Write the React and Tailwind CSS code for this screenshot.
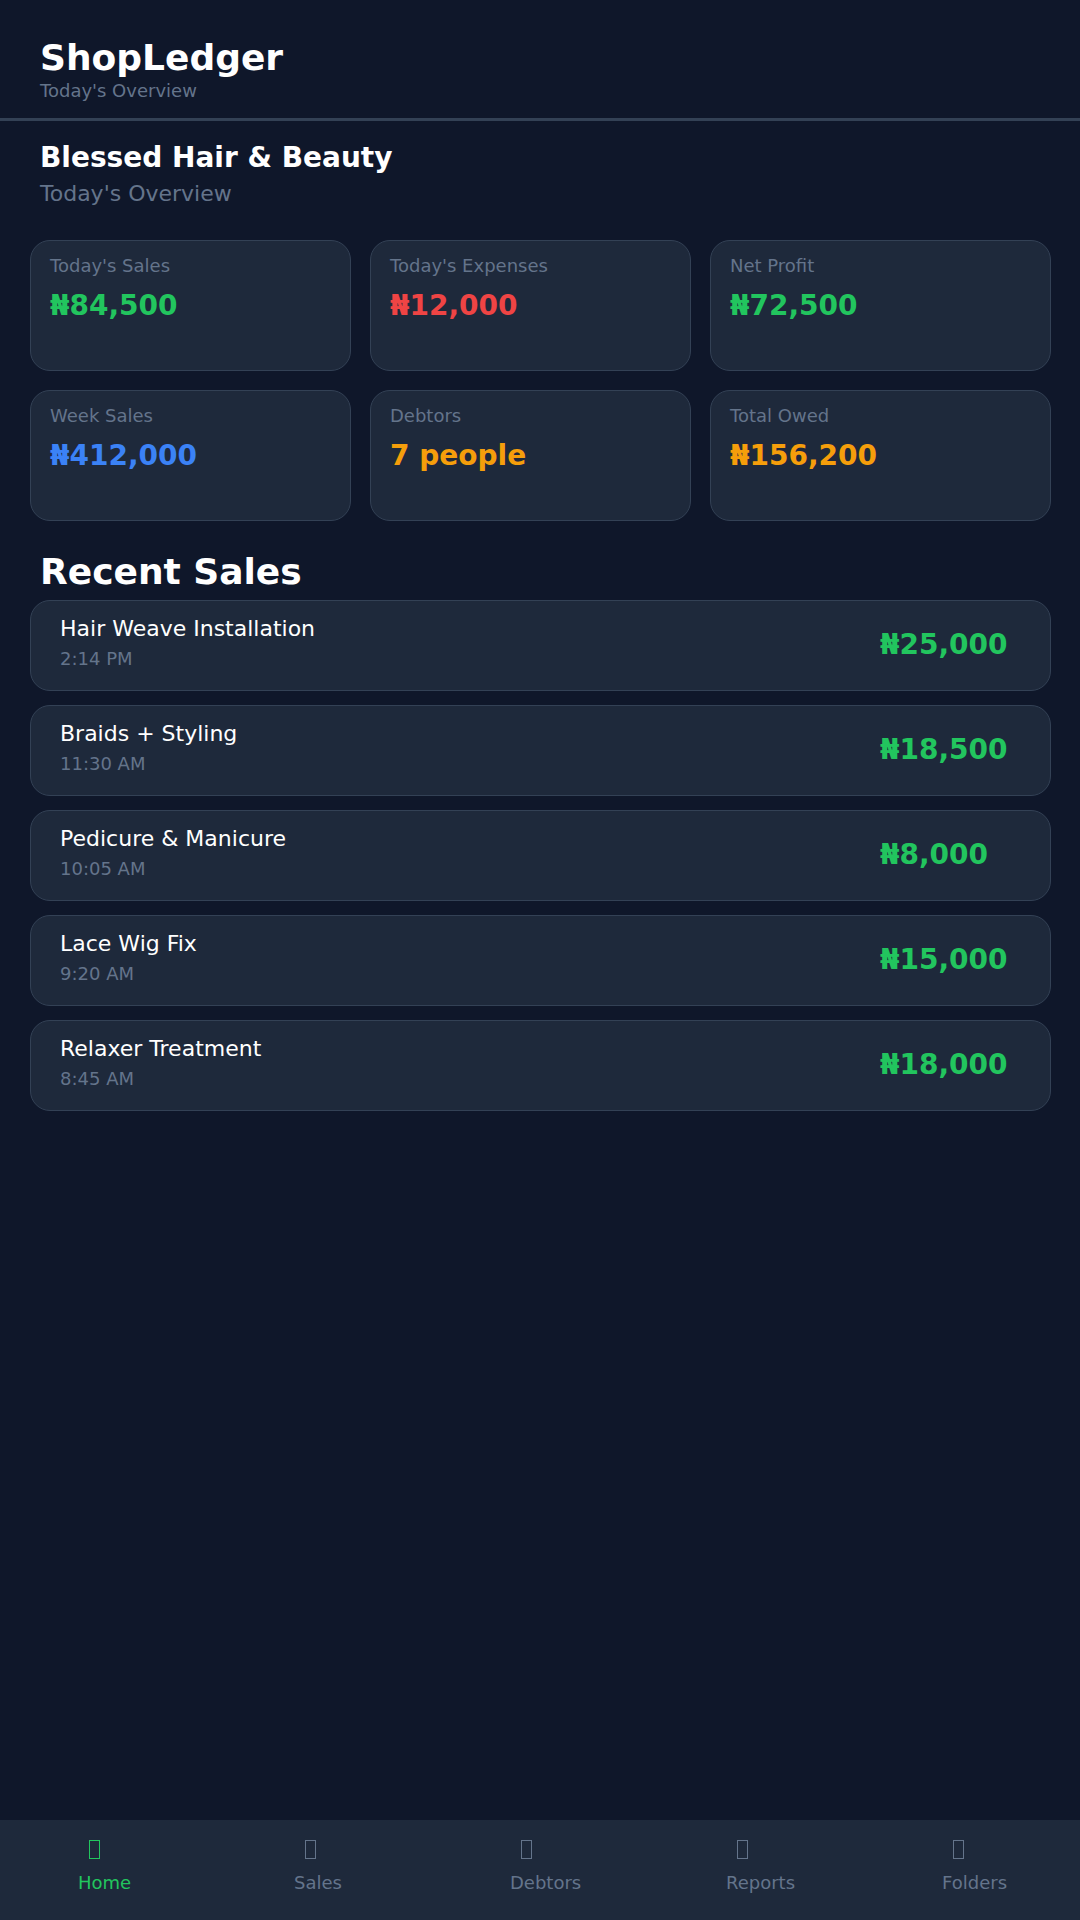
const STATS = [
  { label: "Today's Sales", value: '₦84,500', color: 'text-[#22c55e]' },
  { label: "Today's Expenses", value: '₦12,000', color: 'text-[#ef4444]' },
  { label: 'Net Profit', value: '₦72,500', color: 'text-[#22c55e]' },
  { label: 'Week Sales', value: '₦412,000', color: 'text-[#3b82f6]' },
  { label: 'Debtors', value: '7 people', color: 'text-[#f59e0b]' },
  { label: 'Total Owed', value: '₦156,200', color: 'text-[#f59e0b]' },
];

const SALES = [
  { name: 'Hair Weave Installation', time: '2:14 PM', amount: '₦25,000' },
  { name: 'Braids + Styling', time: '11:30 AM', amount: '₦18,500' },
  { name: 'Pedicure & Manicure', time: '10:05 AM', amount: '₦8,000' },
  { name: 'Lace Wig Fix', time: '9:20 AM', amount: '₦15,000' },
  { name: 'Relaxer Treatment', time: '8:45 AM', amount: '₦18,000' },
];

const NAV = [
  { label: 'Home', active: true },
  { label: 'Sales' },
  { label: 'Debtors' },
  { label: 'Reports' },
  { label: 'Folders' },
];

export default function App() {
  return (
    <div className="flex h-[1920px] flex-col bg-[#0f172a] font-['DejaVu_Sans',sans-serif] text-white">
      <header className="border-b-[3px] border-[#334155] px-10 pt-[37px] pb-[17px]">
        <h1 className="text-[36px] font-bold leading-[42px]">ShopLedger</h1>
        <p className="mt-px text-[18px] leading-[21px] text-[#64748b]">Today's Overview</p>
      </header>

      <section className="px-10 pt-5">
        <h2 className="text-[28px] font-bold leading-[33px]">Blessed Hair &amp; Beauty</h2>
        <p className="mt-[7px] text-[22px] leading-[26px] text-[#64748b]">Today's Overview</p>
      </section>

      <div className="grid grid-cols-[321px_321px_341px] gap-[19px] px-[30px] pt-[33px]">
        {STATS.map((s) => (
          <div key={s.label} className="h-[131px] rounded-[20px] border border-[#334155] bg-[#1e293b] pt-[14px] pl-[19px]">
            <div className="text-[18px] leading-[21px] text-[#64748b]">{s.label}</div>
            <div className={`mt-[13px] text-[28px] font-bold leading-[33px] ${s.color}`}>{s.value}</div>
          </div>
        ))}
      </div>

      <h2 className="px-10 pt-[30px] text-[36px] font-bold leading-[42px]">Recent Sales</h2>

      <div className="mt-[7px] flex w-[1051px] flex-col gap-[14px] pl-[30px]">
        {SALES.map((s) => (
          <div key={s.name} className="flex h-[91px] items-center justify-between rounded-[20px] border border-[#334155] bg-[#1e293b] px-[29px]">
            <div className="pb-[6px]">
              <div className="text-[22px] leading-[26px]">{s.name}</div>
              <div className="mt-[6px] text-[18px] leading-[21px] text-[#64748b]">{s.time}</div>
            </div>
            <div className="mb-[3px] w-[141px] text-[28px] font-bold leading-[33px] text-[#22c55e]">{s.amount}</div>
          </div>
        ))}
      </div>

      <nav className="mt-auto grid h-[100px] grid-cols-5 bg-[#1e293b] pt-5">
        {NAV.map((n) => (
          <div key={n.label} className={`pl-[78px] ${n.active ? 'text-[#22c55e]' : 'text-[#64748b]'}`}>
            {/* icon glyph is a missing-font box in the design */}
            <div className="ml-[11px] h-[19px] w-[11px] border border-current" />
            <div className="mt-[13px] text-[18px] leading-[21px]">{n.label}</div>
          </div>
        ))}
      </nav>
    </div>
  );
}
